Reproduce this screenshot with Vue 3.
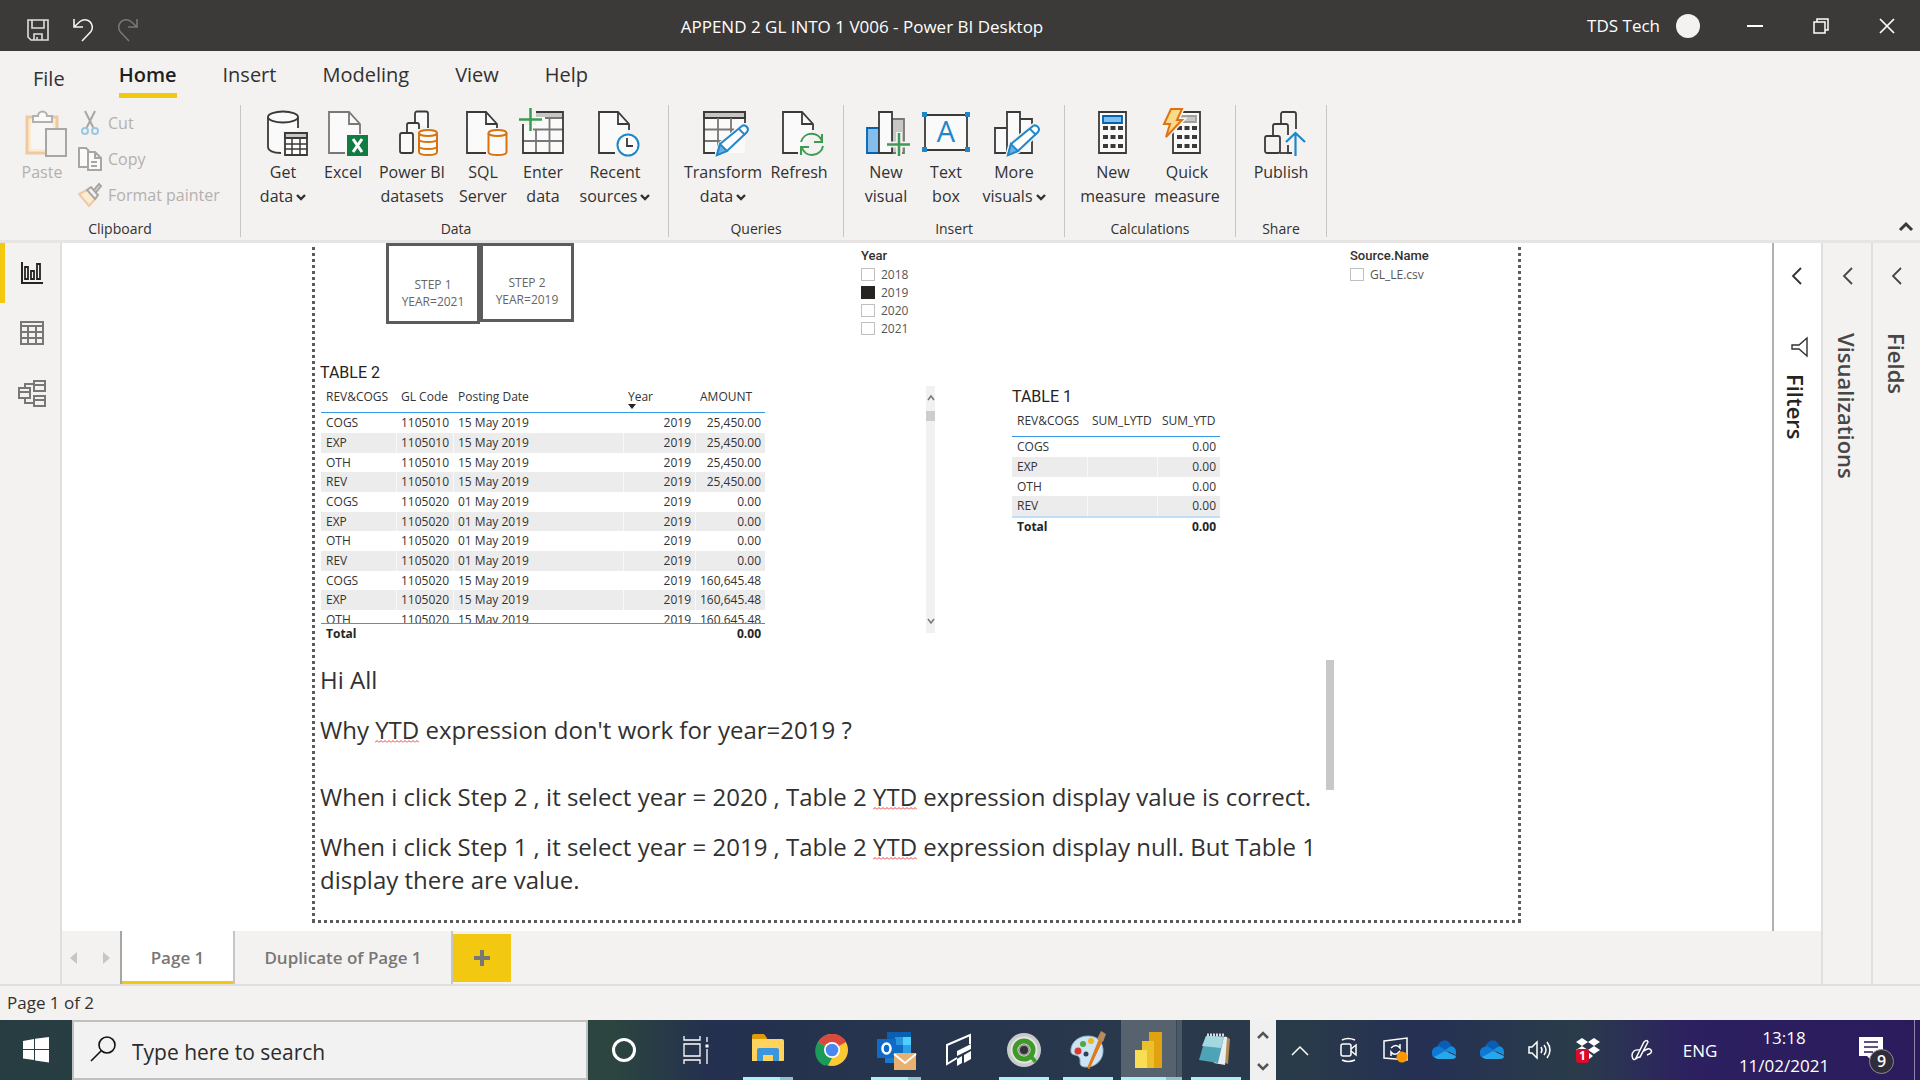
<script setup>
import { ref } from 'vue'

const menuTabs = ['Home', 'Insert', 'Modeling', 'View', 'Help']

const ribbonGroups = [
  {
    name: 'Data', cls: 'g-data',
    items: [
      { icon: 'getdata', lines: ['Get', 'data'], caret: true, w: 60 },
      { icon: 'excel', lines: ['Excel'], w: 60 },
      { icon: 'pbi', lines: ['Power BI', 'datasets'], w: 78 },
      { icon: 'sql', lines: ['SQL', 'Server'], w: 64 },
      { icon: 'enter', lines: ['Enter', 'data'], w: 56 },
      { icon: 'recent', lines: ['Recent', 'sources'], caret: true, w: 88 }
    ]
  },
  {
    name: 'Queries', cls: 'g-std',
    items: [
      { icon: 'transform', lines: ['Transform', 'data'], caret: true, w: 86 },
      { icon: 'refresh', lines: ['Refresh'], w: 66 }
    ]
  },
  {
    name: 'Insert', cls: 'g-wide',
    items: [
      { icon: 'newvisual', lines: ['New', 'visual'], w: 56 },
      { icon: 'textbox', lines: ['Text', 'box'], w: 64 },
      { icon: 'more', lines: ['More', 'visuals'], caret: true, w: 72 }
    ]
  },
  {
    name: 'Calculations', cls: 'g-std',
    items: [
      { icon: 'measure', lines: ['New', 'measure'], w: 74 },
      { icon: 'quick', lines: ['Quick', 'measure'], w: 74 }
    ]
  },
  {
    name: 'Share', cls: 'g-std',
    items: [{ icon: 'publish', lines: ['Publish'], w: 68 }]
  }
]

const years = ref([
  { label: '2018', on: false },
  { label: '2019', on: true },
  { label: '2020', on: false },
  { label: '2021', on: false }
])

const kinds = ['COGS', 'EXP', 'OTH', 'REV']
const postings = [
  { code: '1105010', date: '15 May 2019', amount: '25,450.00' },
  { code: '1105020', date: '01 May 2019', amount: '0.00' },
  { code: '1105020', date: '15 May 2019', amount: '160,645.48' }
]
const ledger = postings
  .flatMap((p) => kinds.map((kind) => ({ kind, ...p })))
  .slice(0, 11)

const search = ref('')
</script>

<template>
  <div class="app">
    <header class="titlebar">
      <div class="quick">
        <button aria-label="Save">
          <svg width="24" height="24" viewBox="0 0 24 24" fill="none" stroke="#e0dedc" stroke-width="1.600"><path d="M2 2h20v20H5l-3-3zM6 2v8h12V2M8 22v-6h8v6M11 19v3" /></svg>
        </button>
        <button aria-label="Undo">
          <svg width="24" height="24" viewBox="0 0 24 24" fill="none" stroke="#f3f2f1" stroke-width="1.600"><path d="M3 1v8h9M3 9L9 3.500a7.500 7.500 0 0 1 11 10L11 23" /></svg>
        </button>
        <button aria-label="Redo">
          <svg width="24" height="24" viewBox="0 0 24 24" fill="none" stroke="#797775" stroke-width="1.600"><path d="M21 1v8h-9M21 9l-6-5.500a7.500 7.500 0 0 0-11 10L13 23" /></svg>
        </button>
      </div>
      <div class="doc-title">APPEND 2 GL INTO 1 V006 - Power BI Desktop</div>
      <div class="account">
        <span>TDS Tech</span><i class="avatar"></i>
      </div>
      <div class="winctl">
        <button aria-label="Minimize"><svg width="16" height="16" viewBox="0 0 16 16" stroke="#fff" stroke-width="2"><path d="M0 8h16" /></svg></button>
        <button aria-label="Restore"><svg width="16" height="16" viewBox="0 0 16 16" fill="none" stroke="#fff" stroke-width="1.500"><path d="M1 4h11v11H1zM4 4V1h11v11h-3" /></svg></button>
        <button aria-label="Close"><svg width="16" height="16" viewBox="0 0 16 16" stroke="#fff" stroke-width="1.700"><path d="M1 1l14 14M15 1L1 15" /></svg></button>
      </div>
    </header>

    <nav class="menu">
      <button class="file">File</button>
      <button v-for="t in menuTabs" :key="t" :class="{ active: t === 'Home' }">{{ t }}</button>
    </nav>

    <section class="ribbon">
      <div class="group g-clip">
        <div class="tools">
          <button class="tool disabled paste" disabled>
            <svg class="ico" viewBox="0 0 48 48" fill="none" stroke-width="2">
              <path d="M9 9h30v36H9z" fill="#fbecd0" stroke="#f0c9a0" stroke-width="3" />
              <path d="M13 13h22v28H13z" fill="#f7f6f5" />
              <path d="M15 14V8h5a4.500 4.500 0 0 1 9 0h5v6z" fill="#fafafa" stroke="#b3b0ad" />
              <path d="M28 21h20v27H28z" fill="#f3f2f1" stroke="#a8a6a4" />
            </svg>
            <span>Paste</span>
          </button>
          <div class="clip-list">
            <button class="disabled" disabled>
              <svg width="24" height="26" viewBox="0 0 24 26" fill="none" stroke-width="2"><path d="M7 1l9 18M17 1L8 19" stroke="#a8a6a4" /><circle cx="7" cy="21" r="3" stroke="#9cc7e2" /><circle cx="17" cy="21" r="3" stroke="#9cc7e2" /></svg>
              Cut
            </button>
            <button class="disabled" disabled>
              <svg width="24" height="26" viewBox="0 0 24 26" fill="#fafafa" stroke="#a8a6a4" stroke-width="2"><path d="M9 21H1V2h7l3 3" /><path d="M10 6h7l6 6v12H10zM17 6v6h6M13 16h6M13 20h6" /></svg>
              Copy
            </button>
            <button class="disabled" disabled>
              <svg width="24" height="26" viewBox="0 0 24 26" fill="none" stroke-width="2"><path d="M9 8L1 12l10 12 7-8z" fill="#fbecd0" stroke="#efc9a6" /><path d="M9 8l4-3 7 8-3 4zM16 8l5-6 2 2-5 6" fill="#f3f2f1" stroke="#a8a6a4" /></svg>
              Format painter
            </button>
          </div>
        </div>
        <div class="gname">Clipboard</div>
      </div>

      <div v-for="g in ribbonGroups" :key="g.name" class="group" :class="g.cls">
        <div class="tools">
          <button v-for="it in g.items" :key="it.icon" class="tool" :style="{ width: it.w + 'px' }">
            <svg class="ico" viewBox="0 0 48 48" fill="none" stroke="#3b3a39" stroke-width="1.800">
              <template v-if="it.icon === 'getdata'">
                <path d="M9 9v30c0 3.500 6 6 15 6V23h15V9" fill="#fafafa" stroke="none" />
                <path d="M39 20V9M9 9v30c0 3.500 5 6 13 6" /><ellipse cx="24" cy="9" rx="15" ry="5.500" fill="#fafafa" />
                <path d="M26 25h22v22H26z" fill="#fff" /><path d="M26 25h22v5H26z" fill="#c8c6c4" /><path d="M26 36h22M26 41h22M33 30v17M41 30v17" stroke-width="1.500" />
              </template>
              <template v-else-if="it.icon === 'excel'">
                <path d="M26 45H10V4h20l11 12v10" fill="#fafafa" stroke="#797775" /><path d="M30 4v12h11" stroke="#797775" />
                <path d="M28 27h21v21H28z" fill="#107c41" stroke="none" /><path d="M34 31l9 13M43 31l-9 13" stroke="#fff" stroke-width="3" />
              </template>
              <template v-else-if="it.icon === 'pbi'">
                <path d="M27 14V5.500a2 2 0 0 1 2-2h9a2 2 0 0 1 2 2V20M19 24v-7a2 2 0 0 1 2-2h8a2 2 0 0 1 2 2v4" fill="#fafafa" />
                <rect x="12" y="25" width="13" height="20" rx="2" fill="#fafafa" />
                <path d="M31 25v19c0 4 18 4 18 0V25" fill="#fafafa" stroke="#d9730d" stroke-width="2" /><ellipse cx="40" cy="25" rx="9" ry="3" fill="#fafafa" stroke="#d9730d" stroke-width="2" /><path d="M31 31c0 4 18 4 18 0M31 38c0 4 18 4 18 0" stroke="#d9730d" stroke-width="2" />
              </template>
              <template v-else-if="it.icon === 'sql'">
                <path d="M27 45H8V4h19l11 12v4" fill="#fafafa" /><path d="M27 4v12h11" />
                <path d="M29.500 25v19c0 4 18 4 18 0V25" fill="#fafafa" stroke="#d9730d" stroke-width="2" /><ellipse cx="38.500" cy="25" rx="9" ry="3" fill="#fafafa" stroke="#d9730d" stroke-width="2" />
              </template>
              <template v-else-if="it.icon === 'enter'">
                <path d="M4 17h40v28H4zM17 4h27v13H17z" fill="#fafafa" stroke="none" /><path d="M17 4h27v5H17z" fill="#c8c6c4" stroke="none" />
                <path d="M17 21v24M30.500 10v35M26 10h18M14 21.500h30M4 33h40" stroke="#797775" /><path d="M17 4h27v41H4V16" />
                <path d="M11.500 0v23M0 11.500h23" stroke="#3e9b53" stroke-width="2.500" />
              </template>
              <template v-else-if="it.icon === 'recent'">
                <path d="M24 45H8V4h19l11 12v6" fill="#fafafa" /><path d="M27 4v12h11" />
                <circle cx="37" cy="37" r="10.500" fill="#fff" stroke="#1f87c9" stroke-width="2" /><path d="M36 30v8h6" />
              </template>
              <template v-else-if="it.icon === 'transform'">
                <path d="M5 4h41v41H5z" fill="#fafafa" stroke="none" /><path d="M5 4h41v6H5z" fill="#c8c6c4" />
                <path d="M19 10v35M32 10v24M5 21.500h30M5 33h22" stroke="#797775" /><path d="M46 15V4H5v41h11" />
                <path d="M18 47l3-11 22-18c3-2 8 2 5 6L28 43z" fill="#fff" stroke="#f3f2f1" stroke-width="4" /><path d="M18 47l3-11 22-18c3-2 8 2 5 6L28 43z" fill="#fff" stroke="#1f87c9" stroke-width="2" /><path d="M18 47l3-11 7 7z" fill="#69afe5" stroke="#1f87c9" /><path d="M40 21l6 6" stroke="#1f87c9" />
              </template>
              <template v-else-if="it.icon === 'refresh'">
                <path d="M23 45H8V4h19l11 12v6" fill="#fafafa" /><path d="M27 4v12h11" />
                <path d="M26 34a11 11 0 0 1 21-1M47 26v8h-8M48 38a11 11 0 0 1-21 2M26 47v-8h8" stroke="#3e9b53" stroke-width="2" />
              </template>
              <template v-else-if="it.icon === 'newvisual'">
                <path d="M30 11h12v34H30z" fill="#c8c6c4" stroke="#797775" /><path d="M5 20h12v25H5z" fill="#83beec" stroke="#0063b1" /><path d="M17 4h13v41H17z" fill="#fafafa" />
                <path d="M37 24v24M25 36.500h24" stroke="#f3f2f1" stroke-width="6" /><path d="M37 25v23M25 36.500h23" stroke="#3e9b53" stroke-width="2.500" />
              </template>
              <template v-else-if="it.icon === 'textbox'">
                <path d="M3 7h42v35H3z" fill="#fafafa" />
                <path d="M0 4h5v5H0zM43 4h5v5h-5zM0 39h5v5H0zM43 39h5v5h-5z" fill="#1f87c9" stroke="none" />
                <text x="24" y="34" text-anchor="middle" class="tb-a">A</text>
              </template>
              <template v-else-if="it.icon === 'more'">
                <path d="M30 11h12v34H30zM5 20h12v25H5zM17 4h13v41H17z" fill="#fafafa" />
                <path d="M18 47l3-11 22-18c3-2 8 2 5 6L28 43z" fill="#fff" stroke="#f3f2f1" stroke-width="5" /><path d="M18 47l3-11 22-18c3-2 8 2 5 6L28 43z" fill="#fff" stroke="#1f87c9" stroke-width="2" /><path d="M18 47l3-11 7 7z" fill="#69afe5" stroke="#1f87c9" /><path d="M40 21l6 6" stroke="#1f87c9" />
              </template>
              <template v-else-if="it.icon === 'measure'">
                <path d="M10 4h27v41H10z" fill="#fafafa" /><path d="M14 8h19v7H14z" fill="#83beec" stroke="#0063b1" />
                <path d="M14 20h20M14 29h20M14 38h20" stroke-width="4" stroke-dasharray="5 2.500" />
              </template>
              <template v-else-if="it.icon === 'quick'">
                <path d="M10 4h27v41H10z" fill="#fafafa" /><path d="M18 8h15v6H18z" fill="#c8c6c4" stroke="#a19f9d" />
                <path d="M14 20h20M14 29h20M14 38h20" stroke-width="4" stroke-dasharray="5 2.500" />
                <path d="M8 1h11l-5 11h5L3 29l4-13H1z" fill="#fbdd9a" stroke="#f3f2f1" stroke-width="5" /><path d="M8 1h11l-5 11h5L3 29l4-13H1z" fill="#fbd98a" stroke="#e0720f" stroke-width="2" />
              </template>
              <template v-else>
                <path d="M24 15V6a2 2 0 0 1 2-2h11a2 2 0 0 1 2 2v15M16 27v-9a2 2 0 0 1 2-2h11a2 2 0 0 1 2 2v9M31 37v8h4" />
                <rect x="8" y="28" width="15" height="17" rx="2" /><path d="M23 45h8" />
                <path d="M38.500 48V25M29 34l9.500-9L48 34" stroke="#1f87c9" stroke-width="2.200" />
              </template>
            </svg>
            <span v-for="(l, i) in it.lines" :key="l">{{ l }}<svg v-if="it.caret && i === 1" class="caret" width="10" height="7" viewBox="0 0 10 7" fill="none" stroke="#323130" stroke-width="2.400"><path d="M1 1l4 4 4-4" /></svg></span>
          </button>
        </div>
        <div class="gname">{{ g.name }}</div>
      </div>
      <button class="collapse" aria-label="Collapse ribbon"><svg width="14" height="9" viewBox="0 0 14 9" fill="none" stroke="#3b3a39" stroke-width="3"><path d="M1 8l6-6 6 6" /></svg></button>
    </section>

    <main class="work">
      <aside class="rail">
        <button class="on" aria-label="Report">
          <svg width="24" height="24" viewBox="0 0 24 24" fill="none" stroke="#252423" stroke-width="2"><path d="M2 1v21h21" /><path d="M5 6h3v12H5zM11 10h3v8h-3zM17 3h3v15h-3z" stroke-width="1.800" /></svg>
        </button>
        <button aria-label="Data">
          <svg width="26" height="24" viewBox="0 0 26 24" fill="none" stroke="#797775" stroke-width="2"><path d="M2 1h22v22H2zM2 5h22M2 11h22M2 17h22M9 5v18M17 5v18" /></svg>
        </button>
        <button aria-label="Model">
          <svg width="30" height="28" viewBox="0 0 30 28" fill="none" stroke="#797775" stroke-width="2"><path d="M17 2h11v10H17zM17 6h11M17 17h11v10H17zM17 21h11M2 9h11v10H2zM2 13h11M8 9V5h9M8 19v5h9" /></svg>
        </button>
      </aside>

      <div class="center">
        <div class="stage">
          <div class="canvas">
            <div class="page">
              <div class="row-top">
                <button class="step s1">STEP 1<br />YEAR=2021</button>
                <button class="step">STEP 2<br />YEAR=2019</button>
                <fieldset class="slicer year">
                  <legend>Year</legend>
                  <label v-for="y in years" :key="y.label"><input v-model="y.on" type="checkbox" />{{ y.label }}</label>
                </fieldset>
                <fieldset class="slicer source">
                  <legend>Source.Name</legend>
                  <label><input type="checkbox" />GL_LE.csv</label>
                </fieldset>
              </div>

              <div class="row-mid">
                <div class="visual">
                  <h2>TABLE 2</h2>
                  <div class="clip">
                    <table class="t2">
                      <colgroup><col class="c75" /><col class="c57" /><col class="c170" /><col class="c72" /><col class="c70" /></colgroup>
                      <thead><tr><th>REV&amp;COGS</th><th>GL Code</th><th>Posting Date</th><th class="sorted">Year</th><th>AMOUNT</th></tr></thead>
                      <tbody>
                        <tr v-for="(r, i) in ledger" :key="i"><td>{{ r.kind }}</td><td class="n">{{ r.code }}</td><td>{{ r.date }}</td><td class="n">2019</td><td class="n">{{ r.amount }}</td></tr>
                      </tbody>
                      <tfoot><tr><td>Total</td><td></td><td></td><td></td><td class="n">0.00</td></tr></tfoot>
                    </table>
                  </div>
                </div>
                <div class="vscroll">
                  <svg width="8" height="6" viewBox="0 0 8 6" fill="none" stroke="#777" stroke-width="1.500"><path d="M1 5l3-4 3 4" /></svg>
                  <i></i>
                  <svg width="8" height="6" viewBox="0 0 8 6" fill="none" stroke="#777" stroke-width="1.500"><path d="M1 1l3 4 3-4" /></svg>
                </div>
                <div class="visual v1">
                  <h2>TABLE 1</h2>
                  <table class="t1">
                    <colgroup><col class="c75" /><col class="c70" /><col class="c63" /></colgroup>
                    <thead><tr><th>REV&amp;COGS</th><th>SUM_LYTD</th><th>SUM_YTD</th></tr></thead>
                    <tbody><tr v-for="k in kinds" :key="k"><td>{{ k }}</td><td></td><td class="n">0.00</td></tr></tbody>
                    <tfoot><tr><td>Total</td><td></td><td class="n">0.00</td></tr></tfoot>
                  </table>
                </div>
              </div>

              <div class="note">
                <div class="note-text">
                  <p>Hi All</p>
                  <p class="gap">Why <u>YTD</u> expression don't work for year=2019 ?</p>
                  <p>When i click Step 2 , it select year = 2020 , Table 2 <u>YTD</u> expression display value is correct.</p>
                  <p>When i click Step 1 , it select year = 2019 , Table 2 <u>YTD</u> expression display null. But Table 1<br />display there are value.</p>
                </div>
                <i class="note-bar"></i>
              </div>
            </div>
          </div>
          <aside class="pane filters">
            <button aria-label="Expand filters"><svg width="11" height="18" viewBox="0 0 11 18" fill="none" stroke="#323130" stroke-width="1.800"><path d="M10 1L2 9l8 8" /></svg></button>
            <svg class="funnel" width="18" height="20" viewBox="0 0 18 20" fill="none" stroke="#323130" stroke-width="1.400"><path d="M17 1v18l-8-7H2V8h7z" /></svg>
            <h3>Filters</h3>
          </aside>
        </div>
        <div class="pages">
          <div class="pager">
            <button aria-label="Previous page"><svg width="7" height="12" viewBox="0 0 7 12" fill="#c8c6c4"><path d="M7 0v12L0 6z" /></svg></button>
            <button aria-label="Next page"><svg width="7" height="12" viewBox="0 0 7 12" fill="#c8c6c4"><path d="M0 0v12l7-6z" /></svg></button>
          </div>
          <button class="ptab cur">Page 1</button>
          <button class="ptab dup">Duplicate of Page 1</button>
          <button class="add" aria-label="New page"><svg width="16" height="16" viewBox="0 0 16 16" stroke="#797775" stroke-width="4"><path d="M8 0v16M0 8h16" /></svg></button>
        </div>
      </div>

      <aside class="pane viz">
        <button aria-label="Expand visualizations"><svg width="11" height="18" viewBox="0 0 11 18" fill="none" stroke="#484644" stroke-width="1.800"><path d="M10 1L2 9l8 8" /></svg></button>
        <h3>Visualizations</h3>
      </aside>
      <aside class="pane">
        <button aria-label="Expand fields"><svg width="11" height="18" viewBox="0 0 11 18" fill="none" stroke="#484644" stroke-width="1.800"><path d="M10 1L2 9l8 8" /></svg></button>
        <h3>Fields</h3>
      </aside>
    </main>

    <div class="status">Page 1 of 2</div>

    <footer class="taskbar">
      <button class="start" aria-label="Start"><svg width="26" height="26" viewBox="0 0 26 26" fill="#fff"><path d="M0 4l11-2v10H0zM12 1.800L26 0v12H12zM0 13h11v10L0 21.500zM12 13h14v12.500L12 23.500z" /></svg></button>
      <label class="search">
        <svg width="26" height="26" viewBox="0 0 26 26" fill="none" stroke="#111" stroke-width="1.600"><circle cx="17" cy="9" r="8" /><path d="M11 15L1 25" /></svg>
        <input v-model="search" type="text" placeholder="Type here to search" aria-label="Search" />
      </label>
      <div class="apps">
        <button class="app72" aria-label="Cortana"><svg width="26" height="26" viewBox="0 0 26 26" fill="none" stroke="#fff" stroke-width="3"><circle cx="13" cy="13" r="10.500" /></svg></button>
        <button class="app72 tv" aria-label="Task view"><svg width="26" height="26" viewBox="0 0 26 26" fill="none" stroke="#fff" stroke-width="1.300"><path d="M1 -1v4h16v-4M1 7h16v12H1zM1 27v-4h16v4M24 0v5M24 12v15" /><path d="M22.500 7.500h3v3h-3z" fill="#fff" stroke="none" /></svg></button>
        <button class="run stack" aria-label="File Explorer">
          <svg width="34" height="34" viewBox="0 0 34 34"><path d="M1 3q0-2 2-2h10l3 4v4H1z" fill="#dd9b0a" /><path d="M1 6h30q2 0 2 2v19q0 1-1 1H1z" fill="#ffd35c" /><path d="M6 17q0-2 2-2h18q2 0 2 2v11h-6v-6H12v6H6z" fill="#3b96dd" /></svg>
        </button>
        <button aria-label="Chrome">
          <svg width="34" height="34" viewBox="0 0 34 34"><circle cx="17" cy="17" r="16" fill="#fcc934" /><path d="M17 17L3.100 9a16 16 0 0 1 27.800 0z" fill="#d9493e" /><path d="M17 17l-7 16A16 16 0 0 1 3.100 9z" fill="#1c9a57" /><path d="M10 20.500l7 4.500-4 7.500a16 16 0 0 1-4-1.800z" fill="#1c9a57" /><path d="M17 9h14a16 16 0 0 0-14-8z" fill="#d9493e" /><circle cx="17" cy="17" r="8" fill="#fff" /><circle cx="17" cy="17" r="6.300" fill="#4c87ee" /></svg>
        </button>
        <button class="run stack" aria-label="Outlook">
          <svg width="40" height="42" viewBox="0 0 40 42"><path d="M11 3h24v16H11z" fill="#0a5fb0" /><path d="M19 8h8v8h-8z" fill="#2a94e0" /><path d="M27 8h8v8h-8z" fill="#4fd0fb" /><path d="M11 16h16v10H11z" fill="#0f6cc4" /><path d="M27 16h8v10h-8z" fill="#2d9fe8" /><path d="M9 24h27v10H9z" fill="#1779cf" /><path d="M1 10h19v19H1z" fill="#0f6bc7" /><ellipse cx="10.500" cy="19.500" rx="4" ry="5" fill="none" stroke="#fff" stroke-width="2.500" /><path d="M18 24h22v17H18z" fill="#e9b170" /><path d="M18 25l11 9 11-9" fill="none" stroke="#fff" stroke-width="2" /></svg>
        </button>
        <button aria-label="Tableau Prep">
          <svg width="30" height="34" viewBox="0 0 30 34" fill="none" stroke="#fff" stroke-width="2"><path d="M12 25L2 31V12L25 2v9" /><path d="M12 18l14-7v5l-14 7zM12 26l5-3v7l-5 3zM19 22l7-4v8l-7 4z" fill="#fff" stroke="none" /></svg>
        </button>
        <button class="run" aria-label="Qlik Sense">
          <svg width="36" height="36" viewBox="0 0 36 36"><circle cx="18" cy="18" r="17" fill="#c9cbca" /><circle cx="18" cy="18" r="13.500" fill="#e4e6e5" /><circle cx="18" cy="18" r="9" fill="#f4f4f4" stroke="#3f9a29" stroke-width="5" /><path d="M22 24l6 7 3-2-5-7z" fill="#3f9a29" /><circle cx="18" cy="18" r="5" fill="#333" stroke="#999" stroke-width="2" /></svg>
        </button>
        <button class="run" aria-label="Paint">
          <svg width="38" height="40" viewBox="0 0 38 40"><path d="M19 6C8 6 1 14 2 22c1 4 6 2 8 5 3 4-2 9 6 10 10 1 19-7 18-18C33 11 28 6 19 6z" fill="#cfe4f3" stroke="#8fb3cc" /><circle cx="9" cy="21" r="3.500" fill="#d83c31" /><circle cx="14" cy="14" r="3" fill="#53a93f" /><circle cx="22" cy="11" r="3" fill="#f2b51d" /><circle cx="17" cy="24" r="2.500" fill="#30405a" /><path d="M30 10l3 1-13 28-1-2z" fill="#dd7a1c" stroke="#dd7a1c" /><path d="M28 9l4-8 5 3-3 8z" fill="#b98a5e" /></svg>
        </button>
        <button class="run stack current" aria-label="Power BI Desktop">
          <svg width="30" height="38" viewBox="0 0 30 38"><path d="M15 1h13v36H15z" fill="#e0a30f" /><path d="M8 10h12v27H8z" fill="#ecc02b" /><path d="M1 19h12v18H1z" fill="#f9dd55" /></svg>
        </button>
        <button class="run pad" aria-label="Notepad">
          <svg width="34" height="36" viewBox="0 0 34 36"><path d="M28 4l5 3-2 25-6-2z" fill="#b28c56" /><path d="M11 4l19 1-2 28-11-2z" fill="#e9eef0" /><path d="M9 4l18 1-6 26-19-3z" fill="#4fa3b6" /><path d="M9 4l18 1-3 11-19-2z" fill="#a3d8e0" /><path d="M10 3h18" stroke="#d8dcde" stroke-width="3" stroke-dasharray="2 1" /></svg>
        </button>
      </div>
      <div class="spin">
        <svg width="12" height="8" viewBox="0 0 12 8" fill="none" stroke="#555" stroke-width="2.500"><path d="M1 7l5-5 5 5" /></svg>
        <svg width="12" height="8" viewBox="0 0 12 8" fill="none" stroke="#555" stroke-width="2.500"><path d="M1 1l5 5 5-5" /></svg>
      </div>
      <div class="tray">
        <button aria-label="Hidden icons"><svg width="18" height="11" viewBox="0 0 18 11" fill="none" stroke="#fff" stroke-width="1.500"><path d="M1 10l8-8 8 8" /></svg></button>
        <button aria-label="Meet now"><svg width="18" height="24" viewBox="0 0 18 24" fill="none" stroke="#fff" stroke-width="1.500"><rect x="2" y="6" width="10" height="12" rx="2" /><path d="M12 11l5-4v10l-5-4M3 2q6-3 13 0M3 22q6 3 13 0" /></svg></button>
        <button aria-label="Updates"><svg width="26" height="26" viewBox="0 0 26 26" fill="none" stroke="#fff" stroke-width="1.500"><path d="M1 4l23-3v22L1 21z" /><path d="M8 11q5-5 9 0v-4M17 14q-5 6-9 1v4" /><circle cx="19" cy="20" r="5.500" fill="#ff9800" stroke="none" /></svg></button>
        <button v-for="n in 2" :key="n" aria-label="OneDrive"><svg width="26" height="20" viewBox="0 0 26 20"><path d="M6 8C8-2 19-1 20 6l-6 5z" fill="#0a5cb5" /><path d="M1 14q-1-7 7-8l10 6-12 6q-5 0-5-4z" fill="#0f78d4" /><path d="M14 10l6-4q6 1 5 9z" fill="#1490df" /><path d="M3 17l11-6 11 5q0 3-4 3H6z" fill="#28a8ea" /></svg></button>
        <button aria-label="Volume"><svg width="24" height="20" viewBox="0 0 24 20" fill="none" stroke="#fff" stroke-width="1.500"><path d="M1 7h3l5-5v16l-5-5H1zM13 7q2 3 0 6M16 5q4 5 0 10M19 2q6 8 0 16" /></svg></button>
        <button class="drop" aria-label="Dropbox"><svg width="24" height="24" viewBox="0 0 24 24" fill="#fff"><path d="M6 0l6 4-6 4-6-4zM18 0l6 4-6 4-6-4zM6 8l6 4-6 4-6-4zM18 8l6 4-6 4-6-4zM12 14l5 4-5 4-5-4z" /></svg><b>1</b></button>
        <button class="pen" aria-label="Windows Ink"><svg width="22" height="22" viewBox="0 0 22 22" fill="none" stroke="#fff" stroke-width="1.500"><path d="M5 19L13 3q3-3 4 0L9 18zM9 11q-8-1-8 6 1 6 5 2M13 12q5-4 7-1t-4 5" /></svg></button>
        <button class="lang">ENG</button>
        <button class="clock"><span>13:18</span><span>11/02/2021</span></button>
        <button class="notif" aria-label="Notifications"><svg width="24" height="26" viewBox="0 0 24 26"><path d="M0 0h24v19H14v6l-6-6H0z" fill="#fff" /><path d="M5 5h14M5 10h14M5 15h9" stroke="#2b1b5c" stroke-width="1.500" /></svg><b>9</b></button>
      </div>
      <button class="peek" aria-label="Show desktop"></button>
    </footer>
  </div>
</template>

<style>
body { margin: 0; background: #f3f2f1; }
</style>

<style scoped>
.app { min-height: 100vh; display: flex; flex-direction: column; font-family: "Open Sans", "Noto Sans", sans-serif; font-size: 16px; color: #323130; }
.app * { box-sizing: border-box; }
button { font: inherit; color: inherit; background: none; border: 0; padding: 0; margin: 0; display: flex; align-items: center; justify-content: center; }
svg { flex: none; overflow: visible; }
h2, h3, p { margin: 0; font-weight: 400; }

.titlebar { height: 51px; background: #3b3a39; color: #fff; display: flex; align-items: center; font-size: 17px; }
.quick { width: 160px; padding-left: 26px; display: flex; gap: 21px; padding-top: 8px; }
.doc-title { flex: 1; text-align: center; white-space: nowrap; padding-top: 1px; }
.account { width: 158px; display: flex; align-items: center; justify-content: flex-end; gap: 16px; padding-right: 22px; }
.avatar { width: 24px; height: 24px; border-radius: 50%; background: #f3f2f1; }
.winctl { display: flex; }
.winctl button { width: 66px; height: 51px; }

.menu { height: 54px; display: flex; align-items: flex-start; gap: 46px; padding-left: 33px; font-size: 20px; line-height: 30px; }
.menu button { height: 47px; padding-top: 9px; border-bottom: 5px solid transparent; align-items: flex-start; }
.menu .file { padding-top: 13px; margin-right: 8px; }
.menu .active { font-weight: 600; border-color: #f2c811; color: #201f1e; }

.ribbon { height: 138px; display: flex; align-items: flex-start; border-bottom: 3px solid #e6e5e4; }
.ribbon, .status { background: #f3f2f1; }
.group { height: 132px; display: flex; flex-direction: column; justify-content: space-between; border-right: 1px solid #c8c6c4; }
.g-clip { width: 241px; padding-left: 12px; }
.g-data { padding: 0 9px 0 12px; }
.g-std { padding: 0 11px; }
.g-wide { padding: 0 14px; }
.tools { display: flex; align-items: flex-start; }
.tool { flex-direction: column; justify-content: flex-start; padding-top: 3px; line-height: 24px; white-space: nowrap; }
.ico { width: 48px; height: 48px; margin-bottom: 4px; }
.caret { margin-left: 3px; vertical-align: 1px; }
.tb-a { font-size: 29px; fill: #1f87c9; stroke: none; font-family: "Open Sans", sans-serif; font-weight: 400; }
.paste { width: 60px; }
.disabled { color: #b3b0ad; }
.clip-list { padding-left: 6px; }
.clip-list button { height: 36px; gap: 6px; white-space: nowrap; }
.gname { text-align: center; font-size: 14px; line-height: 16px; }
.g-clip .gname { margin-left: -12px; }
.collapse { margin-left: auto; align-self: flex-end; padding: 0 7px 9px 0; }

.work { flex: 1; display: flex; border-bottom: 2px solid #e1dfdd; min-height: 743px; }
.rail { width: 62px; border-right: 2px solid #e1dfdd; }
.rail button { width: 60px; height: 60px; border-left: 5px solid transparent; padding-right: 2px; }
.rail .on { border-color: #f2c811; }
.center { flex: 1; min-width: 0; display: flex; flex-direction: column; }
.stage { flex: 1; display: flex; background: #fff; }
.canvas { flex: 1; min-width: 0; display: flex; justify-content: center; padding: 0 1px 8px 0; }
.page {
  flex: 0 1 1209px; padding-left: 3px;
  background:
    repeating-linear-gradient(#5c5c5c 0 3px, transparent 3px 6px) left 4px / 3px 100% no-repeat,
    repeating-linear-gradient(#5c5c5c 0 3px, transparent 3px 6px) right 4px / 3px 100% no-repeat,
    repeating-linear-gradient(90deg, #5c5c5c 0 3px, transparent 3px 6px) left bottom / 100% 3px no-repeat;
}
.row-top { display: flex; align-items: flex-start; height: 117px; padding-left: 71px; }
.step { width: 94px; height: 79px; border: 3px solid #5c5c5c; font-size: 12px; line-height: 17px; color: #666; padding-top: 17px; display: block; }
.s1 { height: 81px; padding-top: 19px; }
.slicer { border: 0; margin: 0; padding: 0; font-size: 12px; color: #555; }
.slicer legend { padding: 4px 0 0; font: 500 13px/18px Roboto, sans-serif; color: #323130; }
.slicer label { display: flex; align-items: center; gap: 6px; height: 18px; }
.slicer input { appearance: none; width: 14px; height: 13px; margin: 0; border: 1px solid #c0c0c0; background: #fff; }
.slicer input:checked { background: #252423; border-color: #252423; }
.year { margin-left: 287px; width: 120px; }
.source { margin-left: 369px; }

.row-mid { display: flex; align-items: flex-start; padding-left: 5px; height: 284px; }
.visual h2 { font: 400 16px/24px Roboto, sans-serif; color: #252423; padding-top: 1px; }
.clip { height: 258px; overflow: hidden; }
table { border-collapse: separate; border-spacing: 0; table-layout: fixed; font-size: 12px; line-height: 18px; color: #333; margin-left: 1px; }
.t2 { width: 444px; }
.t1 { width: 208px; margin-left: 0; }
.c75 { width: 75px; } .c57 { width: 57px; } .c170 { width: 170px; } .c72 { width: 72px; } .c70 { width: 70px; } .c63 { width: 63px; }
th { font-weight: 400; text-align: left; height: 28px; vertical-align: top; padding: 3px 0 0 5px; border-bottom: 1px solid #3599e8; white-space: nowrap; }
.sorted::after { content: ""; display: block; width: 0; border: 4px solid transparent; border-top: 5px solid #252423; border-bottom: 0; margin-top: -2px; }
td { height: 20px; padding: 0 4px 0 5px; white-space: nowrap; }
tbody tr:nth-child(3n) td { height: 19px; line-height: 17px; }
tbody tr:nth-child(even) td { background: #ececec; }
tbody tr:nth-child(even) td + td { border-left: 1px solid #f8f8f8; padding-left: 4px; }
.n { text-align: right; }
tfoot td { position: sticky; bottom: 0; background: #fff; font-weight: 700; border-top: 1px solid #3599e8; color: #252423; }
.t1 tfoot td { border-top: 2px solid #bfdffa; }
.vscroll { width: 9px; height: 247px; margin: 26px 0 0 161px; background: #f1f1f1; display: flex; flex-direction: column; align-items: center; padding: 9px 0; }
.vscroll i { width: 9px; height: 10px; background: #cdcdcd; margin: 10px 0 auto; }
.v1 { margin: 24px 0 0 77px; }

.note { display: flex; padding: 16px 187px 27px 5px; justify-content: space-between; }
.note-text { padding-top: 3px; font-size: 24px; line-height: 33px; color: #323130; white-space: nowrap; display: flex; flex-direction: column; gap: 17px; }
.gap { padding-bottom: 17px; }
u { text-decoration: none; background: url("data:image/svg+xml,%3Csvg xmlns='http://www.w3.org/2000/svg' width='4' height='3'%3E%3Cpath d='M0 2.500L2 .5L4 2.500' fill='none' stroke='%23ee3b3b'/%3E%3C/svg%3E") 0 calc(100% - 3px) repeat-x; }
.note-bar { width: 8px; height: 130px; background: #c8c8c8; }

.pane { width: 49px; border-left: 2px solid #e1dfdd; display: flex; flex-direction: column; align-items: center; color: #484644; }
.viz { width: 50px; }
.pane button { height: 66px; width: 46px; }
.pane h3 { writing-mode: vertical-rl; font-size: 22px; font-weight: 600; line-height: 28px; padding-top: 24px; white-space: nowrap; }
.filters { border-color: #b3b0ad; color: #252423; padding-right: 3px; }
.funnel { margin: 28px 0 0 6px; }
.filters h3 { padding-top: 17px; }

.pages { height: 53px; display: flex; align-items: stretch; }
.pager { width: 60px; display: flex; border-right: 2px solid #a6a6a6; padding-left: 8px; gap: 26px; }
.ptab { font-size: 17px; font-weight: 600; color: #797775; border-right: 2px solid #c8c6c4; white-space: nowrap; }
.cur { width: 113px; background: linear-gradient(#f2c811, #f2c811) bottom / 100% 3px no-repeat #fff; }
.dup { width: 218px; }
.add { width: 58px; height: 48px; margin-top: 3px; background: #f2c811; }

.status { height: 34px; line-height: 34px; padding-left: 7px; font-size: 17px; }

.taskbar { height: 60px; display: flex; color: #fff; font-size: 17px; background: linear-gradient(90deg, #273d42 0, #2c453f 32%, #24304f 37%, #26344e 45%, #2a3a4b 65%, #293a49 68%, #253054 74%, #2a3c49 82%, #2b2f56 85%, #2d2060 88%, #2b1b5c 100%); }
.start { width: 72px; }
.search { flex: 0 1 516px; display: flex; align-items: center; background: #f2f2f2; border: 2px solid #c0c0c0; padding-left: 16px; gap: 16px; }
.search input { flex: 1; min-width: 0; border: 0; outline: 0; background: none; font: 21px/28px "Open Sans", sans-serif; color: #2b2b2b; padding: 4px 0 0; }
.search input::placeholder { color: #2b2b2b; opacity: 1; }
.search svg { margin-bottom: 2px; }
.apps { display: flex; }
.apps button { width: 64px; position: relative; }
.apps .app72 { width: 72px; }
.tv { margin-right: 4px; }
.run::after { content: ""; position: absolute; bottom: 0; left: 7px; right: 7px; height: 3px; background: #a9f1f5; }
.stack::after { background: linear-gradient(90deg, #a9f1f5 73%, #8cc4c8 73%); }
.current { background: linear-gradient(90deg, #56636f 90%, #3b4856 90% 92%, #4b5865 92%); background-size: 61px 100%; background-repeat: no-repeat; background-position: 1px 0; padding-right: 6px; }
.current::after { left: 1px; right: 2px; }
.apps .pad { padding-right: 5px; }
.spin { width: 26px; margin-left: auto; background: #f0f0f0; display: flex; flex-direction: column; justify-content: space-between; align-items: center; padding: 11px 0 9px; }
.tray { display: flex; }
.tray button { width: 48px; position: relative; }
.tray .pen { width: 60px; }
.tray .lang { width: 56px; }
.tray .clock { width: 112px; flex-direction: column; line-height: 28px; padding-top: 4px; }
.tray .notif { width: 68px; padding-right: 6px; }
.drop b { position: absolute; left: 12px; top: 29px; width: 13px; height: 14px; background: #d90b2b; border-radius: 3px; font: 700 12px/14px "Open Sans", sans-serif; text-align: center; }
.notif b { position: absolute; left: 29px; top: 29px; width: 25px; height: 25px; border-radius: 50%; background: #2f2d3a; border: 1px solid #8c8a94; font: 600 16px/22px "Open Sans", sans-serif; text-align: center; }
.peek { width: 12px; }
.peek::before { content: ""; width: 1px; height: 60px; background: #8f87ab; }
</style>
